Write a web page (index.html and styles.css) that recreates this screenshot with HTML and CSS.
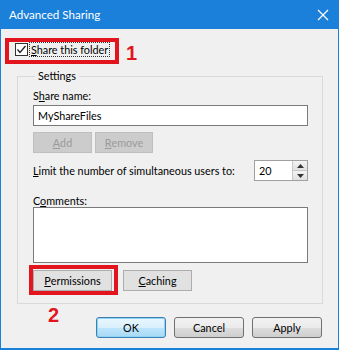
FILE: index.html
```html
<!DOCTYPE html>
<html>
<head>
<meta charset="utf-8">
<link rel="stylesheet" href="styles.css">
</head>
<body>
<div class="window">
  <div class="titlebar">
    <span class="title">Advanced Sharing</span>
    <svg class="close" width="12" height="12" viewBox="0 0 12 12"><path d="M1 1 L11 11 M11 1 L1 11" stroke="#fff" stroke-width="1.2" fill="none"/></svg>
  </div>
  <div class="content">
    <div class="check-row">
      <span class="checkbox"><svg width="11" height="11" viewBox="0 0 11 11"><path d="M1.5 5.5 L4 8.5 L9.5 2" stroke="#222" stroke-width="1.3" fill="none"/></svg></span>
      <span class="check-label"><u>S</u>hare this folder</span>
    </div>
    <fieldset class="group">
      <legend>Settings</legend>
      <div class="label first">S<u>h</u>are name:</div>
      <div class="textbox">MyShareFiles</div>
      <div class="btn-row">
        <span class="btn disabled w59"><u>A</u>dd</span>
        <span class="btn disabled w58"><u>R</u>emove</span>
      </div>
      <div class="limit-row">
        <span class="label"><u>L</u>imit the number of simultaneous users to:</span>
        <span class="spinner">
          <span class="spin-value">20</span>
          <span class="spin-btns">
            <span class="spin-up"><svg width="7" height="4" viewBox="0 0 7 4"><path d="M0 4 L3.5 0 L7 4 Z" fill="#333"/></svg></span>
            <span class="spin-down"><svg width="7" height="4" viewBox="0 0 7 4"><path d="M0 0 L3.5 4 L7 0 Z" fill="#333"/></svg></span>
          </span>
        </span>
      </div>
      <div class="label comments">C<u>o</u>mments:</div>
      <div class="textarea"></div>
      <div class="btn-row perm-row">
        <span class="btn w78"><u>P</u>ermissions</span>
        <span class="btn w69"><u>C</u>aching</span>
      </div>
    </fieldset>
    <div class="dialog-buttons">
      <span class="dbtn default">OK</span>
      <span class="dbtn">Cancel</span>
      <span class="dbtn">Apply</span>
    </div>
  </div>
  <div class="annot box1"></div>
  <div class="annot num num1">1</div>
  <div class="annot box2"></div>
  <div class="annot num num2">2</div>
</div>
</body>
</html>
```

FILE: styles.css
```css
* { box-sizing: border-box; }
html, body { margin: 0; padding: 0; }
body {
  width: 339px;
  height: 350px;
  overflow: hidden;
  font-family: Lato, "Noto Sans", sans-serif;
  font-size: 10.8px;
  color: #000;
}
.window {
  position: relative;
  width: 339px;
  height: 350px;
  background: #f0f0f0;
  border: 1px solid #1b80da;
  border-top: none;
  border-bottom-width: 2px;
}
.titlebar {
  height: 29px;
  margin: 0 -1px;
  background: #1b80da;
  display: flex;
  align-items: center;
  justify-content: space-between;
  padding: 0 10px 0 9px;
}
.title {
  color: #fff;
  font-size: 11.6px;
  line-height: 14px;
}
.check-row {
  display: flex;
  align-items: center;
  height: 20px;
  margin-top: 10px;
  padding-left: 14px;
}
.checkbox {
  width: 13px;
  height: 13px;
  border: 1px solid #333;
  background: #fff;
  display: flex;
  align-items: center;
  justify-content: center;
}
.check-label {
  margin-left: 1px;
  padding: 0 1px;
  line-height: 13px;
  border: 1px dotted #333;
}
.group {
  margin: 10px 15px 0 16px;
  padding: 0 14px 12px 15px;
  border: 1px solid #d9d9d9;
  min-width: 0;
}
.group legend {
  padding: 0 3px;
  margin-left: 2px;
  line-height: 14px;
}
.label { line-height: 14px; white-space: nowrap; }
.label.first { margin-top: 6px; }
.textbox {
  margin-top: 2px;
  height: 21px;
  background: #fff;
  border: 1px solid #7a7a7a;
  padding-left: 4px;
  line-height: 19px;
}
.btn-row {
  display: flex;
  gap: 3px;
  margin-top: 6px;
}
.btn {
  height: 21px;
  display: flex;
  align-items: center;
  justify-content: center;
  background: #e1e1e1;
  border: 1px solid #adadad;
}
.btn.disabled {
  background: #cccccc;
  border-color: #bfbfbf;
  color: #9a9a9a;
}
.w59 { width: 59px; }
.w58 { width: 58px; }
.w78 { width: 79px; }
.w69 { width: 69px; }
.perm-row { gap: 11px; margin-top: 7px; }
.limit-row {
  margin-top: 7px;
  height: 21px;
  display: flex;
  align-items: center;
  justify-content: space-between;
}
.spinner {
  display: flex;
  width: 54px;
  height: 21px;
  border: 1px solid #a0a0a0;
  background: #fff;
}
.spin-value {
  flex: 1;
  padding-left: 4px;
  line-height: 19px;
}
.spin-btns {
  width: 15px;
  display: flex;
  flex-direction: column;
  border-left: 1px solid #c8c8c8;
}
.spin-up, .spin-down {
  flex: 1;
  display: flex;
  align-items: center;
  justify-content: center;
  background: linear-gradient(#f4f4f4, #e0e0e0);
}
.spin-up { border-bottom: 1px solid #c8c8c8; }
.label.comments { margin-top: 13px; line-height: 13px; }
.textarea {
  height: 56px;
  background: #fff;
  border: 1px solid #7a7a7a;
}
.dialog-buttons {
  display: flex;
  justify-content: flex-end;
  gap: 8px;
  margin-top: 13px;
  padding-right: 16px;
}
.dbtn {
  width: 70px;
  height: 21px;
  display: flex;
  align-items: center;
  justify-content: center;
  border: 1px solid #707070;
  border-radius: 3px;
  background: linear-gradient(#f2f2f2 0%, #ebebeb 50%, #dddddd 51%, #cfcfcf 100%);
}
.dbtn.default {
  border-color: #3c7fb1;
  box-shadow: inset 0 0 0 1px #8fd3f5;
  background: linear-gradient(#eaf6fd 0%, #d9f0fc 50%, #bee6fd 51%, #a7d9f5 100%);
}
.annot { position: absolute; }
.box1 {
  left: 4px; top: 38px; width: 114px; height: 26px;
  border: 4px solid #e2151f;
}
.box2 {
  left: 28px; top: 265px; width: 89px; height: 30px;
  border: 4px solid #e2151f;
}
.num {
  color: #e2151f;
  font-family: "Liberation Sans", Arial, sans-serif;
  font-weight: bold;
  font-size: 20px;
  line-height: 20px;
}
.num1 { left: 125px; top: 43px; }
.num2 { left: 47px; top: 305px; }
```
